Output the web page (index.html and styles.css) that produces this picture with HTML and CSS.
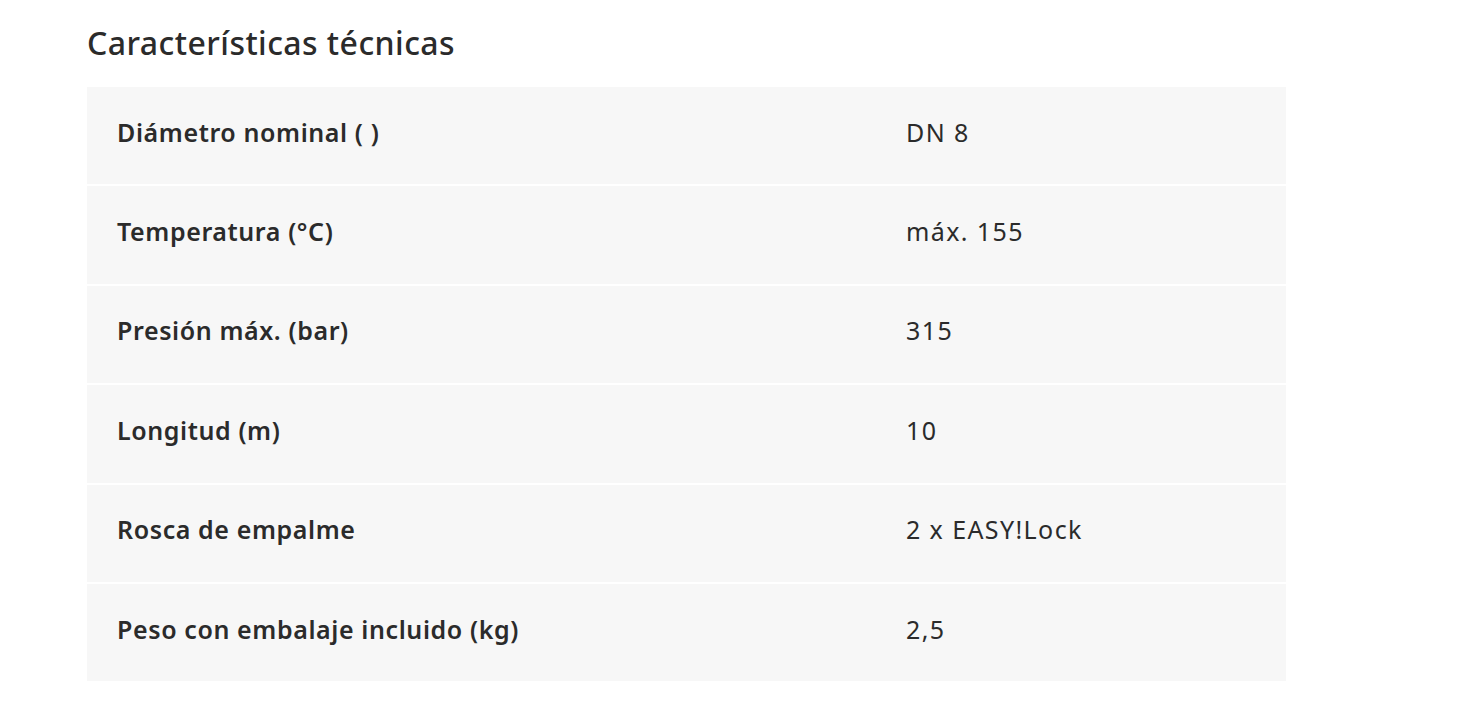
FILE: index.html
```html
<!DOCTYPE html>
<html lang="es">
<head>
<meta charset="utf-8">
<link rel="stylesheet" href="styles.css">
</head>
<body>
<section class="specs">
  <h2 class="specs-title">Características técnicas</h2>
  <div class="specs-table">
    <div class="row"><div class="label">Diámetro nominal ( )</div><div class="value">DN 8</div></div>
    <div class="row"><div class="label">Temperatura (°C)</div><div class="value">máx. 155</div></div>
    <div class="row"><div class="label">Presión máx. (bar)</div><div class="value">315</div></div>
    <div class="row"><div class="label">Longitud (m)</div><div class="value">10</div></div>
    <div class="row"><div class="label">Rosca de empalme</div><div class="value">2 x EASY!Lock</div></div>
    <div class="row"><div class="label">Peso con embalaje incluido (kg)</div><div class="value">2,5</div></div>
  </div>
</section>
</body>
</html>
```

FILE: styles.css
```css
html, body {
  margin: 0;
  padding: 0;
  background: #ffffff;
}
body {
  font-family: "Noto Sans", "Open Sans", sans-serif;
  color: #2b2b2b;
}
.specs {
  width: 1199px;
  margin-left: 87px;
  padding-top: 17px;
}
.specs-title {
  margin: 0 0 18px 0;
  font-size: 32px;
  line-height: 52px;
  font-weight: 500;
  letter-spacing: 0.45px;
}
.specs-table {
  display: flex;
  flex-direction: column;
  gap: 2px;
}
.row {
  box-sizing: border-box;
  display: grid;
  grid-template-columns: 819px 1fr;
  height: 97.4px;
  padding-bottom: 8px;
  align-items: center;
  background: #f7f7f7;
  font-size: 25px;
  line-height: 34px;
}
.label {
  padding-left: 30px;
  font-weight: 600;
  letter-spacing: 0.6px;
}
.value {
  font-weight: 400;
  letter-spacing: 1.4px;
}
```
